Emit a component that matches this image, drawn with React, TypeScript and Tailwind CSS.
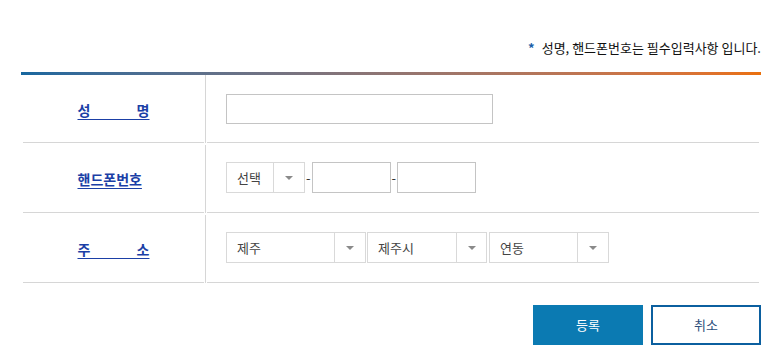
const font = { fontFamily: '"Noto Sans CJK KR", "Noto Sans", sans-serif' }

function Arrow() {
  return (
    <svg width="8" height="4" viewBox="0 0 8 4">
      <path d="M0 0h8L4 4z" fill="#8a8a8a" />
    </svg>
  )
}

function Select({ value, width, arrow = 31 }: { value: string; width: number; arrow?: number }) {
  return (
    <div className="flex h-[31px] border border-[#d9d9d9] bg-white" style={{ width }}>
      <div className="flex flex-1 items-center pl-[10px] text-[13px] text-[#444]">{value}</div>
      <div className="flex items-center justify-center border-l border-[#d9d9d9]" style={{ width: arrow }}>
        <Arrow />
      </div>
    </div>
  )
}

function Label({ text }: { text: string }) {
  return (
    <span className="inline-block w-[72px] text-[14px] font-bold leading-[18px] text-[#1b3fa6] underline decoration-[#1b3fa6] underline-offset-[3px] [text-align-last:justify]">
      {text}
    </span>
  )
}

function Row({ label, first, children }: { label: string; first?: boolean; children: React.ReactNode }) {
  return (
    <div className={first ? 'flex h-[68px]' : 'flex h-[70px]'}>
      <div className="ml-[2px] flex w-[181px] items-center justify-center border-b border-[#d6d6d6] pt-[3px]">
        <Label text={label} />
      </div>
      <div className={first ? 'ml-[1px] w-px bg-[#d6d6d6]' : 'ml-[1px] mt-[2px] w-px bg-[#d6d6d6]'} />
      <div className="ml-[1px] mr-[2px] flex flex-1 items-center border-b border-[#d6d6d6] pl-[19px]">
        {children}
      </div>
    </div>
  )
}

export default function App() {
  return (
    <div className="min-h-[364px] bg-white" style={font}>
      <div className="ml-[21px] w-[740px] pt-[38px]">
        <p className="flex h-[20px] items-center justify-end gap-[7px] text-[13px] text-[#111]">
          <span className="text-[13px] font-bold text-[#1d5fa8]">*</span>
          <span>성명, 핸드폰번호는 필수입력사항 입니다.</span>
        </p>
        <div className="mt-[14px] h-[3px] bg-linear-to-r from-[#16679f] to-[#ea700c]" />

        <Row label="성 명" first>
          <input className="h-[30px] w-[267px] border border-[#c4c4c4] outline-none" />
        </Row>

        <Row label="핸드폰번호">
          <Select value="선택" width={79} arrow={31} />
          <span className="mx-[1px] text-[13px] text-[#333]">-</span>
          <input className="h-[31px] w-[79px] border border-[#c4c4c4] outline-none" />
          <span className="mx-[1px] text-[13px] text-[#333]">-</span>
          <input className="h-[31px] w-[79px] border border-[#c4c4c4] outline-none" />
        </Row>

        <Row label="주 소">
          <div className="flex gap-[1px]">
            <Select value="제주" width={140} />
            <Select value="제주시" width={120} arrow={30} />
            <div className="ml-[1px]">
              <Select value="연동" width={120} arrow={31} />
            </div>
          </div>
        </Row>

        <div className="mt-[22px] flex justify-end gap-[8px]">
          <button className="h-[40px] w-[110px] bg-[#0b7ab2] text-[13px] text-white">등록</button>
          <button className="h-[40px] w-[110px] border-2 border-[#0b5f9f] bg-white text-[13px] text-[#2e4f7c]">
            취소
          </button>
        </div>
      </div>
    </div>
  )
}
